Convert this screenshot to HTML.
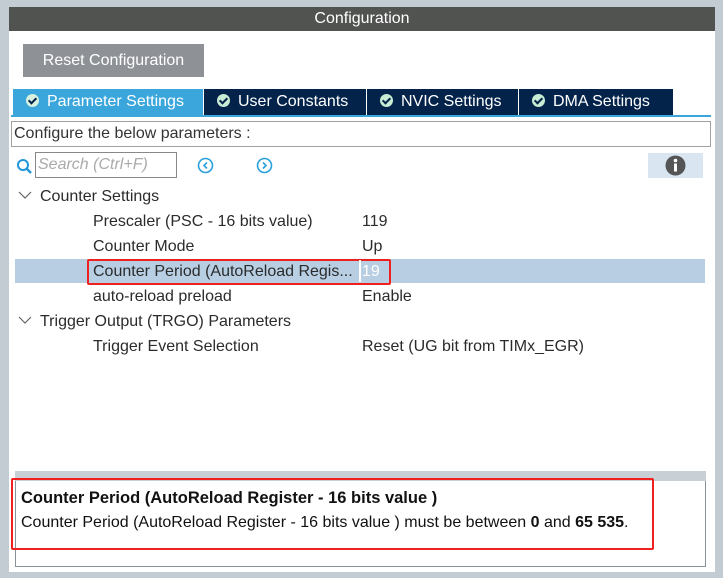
<!DOCTYPE html>
<html><head><style>
body{margin:0;width:723px;height:578px;background:#c3ccd2;font-family:"Liberation Sans",sans-serif;position:relative;overflow:hidden;color:#2b2b2b}
.a{position:absolute;white-space:nowrap}
.hdr{left:9px;top:7px;width:706px;height:24px;background:#515351;color:#fff;font-size:16px;text-align:center;line-height:24px}
.panel{left:9px;top:31px;width:706px;height:541px;background:#fff}
.btn{left:23px;top:44px;width:181px;height:33px;background:#8e9297;color:#fff;font-size:16px;line-height:33px;text-align:center}
.tab{top:89px;height:26px;background:#03234b;color:#fff;font-size:16px;line-height:26px;box-sizing:border-box;padding-left:13px}
.tab i{display:inline-block;width:13px;height:13px;border-radius:50%;background:#c9ecd4;vertical-align:-1px;margin-right:8px;position:relative}
.tab i:after{content:"";position:absolute;left:4px;top:2px;width:3px;height:6px;border:solid #03234b;border-width:0 2px 2px 0;transform:rotate(45deg)}
.row{font-size:16px;line-height:25px;height:25px}
</style></head><body>
<div class="a hdr">Configuration</div>
<div class="a panel"></div>
<div class="a btn">Reset Configuration</div>
<div class="a tab" style="left:13px;width:190px;background:#3aa6dc"><i style="background:#d8f0e0"></i>Parameter Settings</div>
<div class="a tab" style="left:204px;width:162px"><i></i>User Constants</div>
<div class="a tab" style="left:367px;width:151px"><i></i>NVIC Settings</div>
<div class="a tab" style="left:519px;width:154px"><i></i>DMA Settings</div>
<div class="a" style="left:11px;top:115px;width:700px;height:2px;background:#3aa6dc"></div>
<div class="a" style="left:11px;top:121px;width:696px;height:24px;border:1px solid #a0a0a0;font-size:16px;line-height:24px;padding-left:2px;color:#333">Configure the below parameters :</div>
<svg class="a" style="left:16px;top:158px" width="18" height="18"><circle cx="7" cy="7" r="5" fill="none" stroke="#2196d8" stroke-width="2"/><path d="M10.5 10.5L15 15" stroke="#2196d8" stroke-width="2.4"/></svg>
<div class="a" style="left:35px;top:152px;width:138px;height:24px;border:1px solid #888;font-size:16px;line-height:24px;color:#aaa;font-style:italic;padding-left:2px">Search (Ctrl+F)</div>
<svg class="a" style="left:197px;top:157px" width="17" height="17"><circle cx="8.5" cy="8.5" r="7" fill="none" stroke="#2aa0dc" stroke-width="1.6"/><path d="M10 5.5L7 8.5L10 11.5" fill="none" stroke="#2aa0dc" stroke-width="1.6"/></svg>
<svg class="a" style="left:256px;top:157px" width="17" height="17"><circle cx="8.5" cy="8.5" r="7" fill="none" stroke="#2aa0dc" stroke-width="1.6"/><path d="M7 5.5L10 8.5L7 11.5" fill="none" stroke="#2aa0dc" stroke-width="1.6"/></svg>
<div class="a" style="left:648px;top:153px;width:55px;height:25px;background:#d9e6f2"></div>
<svg class="a" style="left:665px;top:155px" width="21" height="21"><circle cx="10.5" cy="10.5" r="10" fill="#555"/><circle cx="10.5" cy="5.5" r="1.8" fill="#fff"/><rect x="9" y="8.5" width="3" height="8" fill="#fff"/></svg>
<div class="a" style="left:15px;top:259px;width:690px;height:24px;background:#b8cfe3"></div>
<div class="a" style="left:87px;top:259px;width:300px;height:22px;border:2px solid #f02020;border-radius:2px"></div>
<div class="a" style="left:359px;top:260px;width:2px;height:22px;background:#fff"></div>
<svg class="a" style="left:18px;top:190px" width="14" height="10"><path d="M1 2L7 8L13 2" fill="none" stroke="#666" stroke-width="1.2"/></svg>
<svg class="a" style="left:18px;top:315px" width="14" height="10"><path d="M1 2L7 8L13 2" fill="none" stroke="#666" stroke-width="1.2"/></svg>
<div class="a row" style="left:40px;top:184px">Counter Settings</div>
<div class="a row" style="left:93px;top:209px">Prescaler (PSC - 16 bits value)</div><div class="a row" style="left:362px;top:209px">119</div>
<div class="a row" style="left:93px;top:234px">Counter Mode</div><div class="a row" style="left:362px;top:234px">Up</div>
<div class="a row" style="left:93px;top:259px">Counter Period (AutoReload Regis...</div><div class="a row" style="left:362px;top:259px;color:#fff">19</div>
<div class="a row" style="left:93px;top:284px">auto-reload preload</div><div class="a row" style="left:362px;top:284px">Enable</div>
<div class="a row" style="left:40px;top:309px">Trigger Output (TRGO) Parameters</div>
<div class="a row" style="left:93px;top:334px">Trigger Event Selection</div><div class="a row" style="left:362px;top:334px">Reset (UG bit from TIMx_EGR)</div>
<div class="a" style="left:15px;top:471px;width:691px;height:10px;background:#c8cfd5"></div>
<div class="a" style="left:15px;top:481px;width:689px;height:85px;border:1px solid #8a9299;border-top:none;background:#fff"></div>
<div class="a" style="left:11px;top:478px;width:639px;height:68px;border:2px solid #f02020;border-radius:2px"></div>
<div class="a" style="left:21px;top:489px;font-size:16.5px;font-weight:bold;color:#111">Counter Period (AutoReload Register - 16 bits value )</div>
<div class="a" style="left:21px;top:514px;font-size:16px;color:#111">Counter Period (AutoReload Register - 16 bits value ) must be between <b>0</b> and <b>65 535</b>.</div>
</body></html>
